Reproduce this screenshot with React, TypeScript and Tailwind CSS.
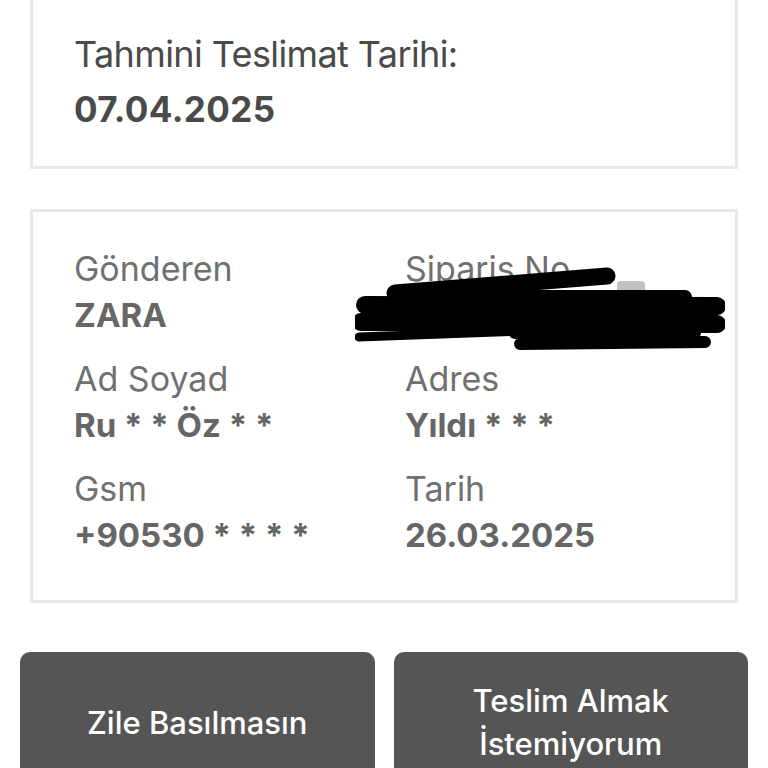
import React from 'react';

const font = { fontFamily: 'Inter, "Liberation Sans", Arial, sans-serif' };

function Field({ label, value }: { label: string; value: string }) {
  return (
    <div>
      <div className="h-[46px] text-[34px] leading-[46px] text-[#707070]">{label}</div>
      <div className="h-[46px] text-[33px] leading-[46px] font-bold text-[#666666]">{value}</div>
    </div>
  );
}

function Scribble() {
  return (
    <svg
      className="absolute left-[322px] top-[55px]"
      width="370"
      height="92"
      viewBox="0 0 370 92"
      fill="none"
    >
      <rect x="262" y="14" width="28" height="14" rx="4" fill="#9a9a9a" opacity="0.6" />
      <path d="M40 26 L252 9" stroke="#000" strokeWidth="17" strokeLinecap="round" />
      <path d="M10 38 L362 39" stroke="#000" strokeWidth="18" strokeLinecap="round" />
      <path d="M40 30 L330 30" stroke="#000" strokeWidth="14" strokeLinecap="round" />
      <path d="M6 55 L362 57" stroke="#000" strokeWidth="18" strokeLinecap="round" />
      <path d="M20 46 L350 47" stroke="#000" strokeWidth="12" strokeLinecap="round" />
      <path d="M4 70 L200 63" stroke="#000" strokeWidth="9" strokeLinecap="round" />
      <path d="M165 77 L350 75" stroke="#000" strokeWidth="12" strokeLinecap="round" />
      <path d="M160 66 L340 66" stroke="#000" strokeWidth="12" strokeLinecap="round" />
    </svg>
  );
}

export default function App() {
  return (
    <div className="w-[768px] h-[768px] overflow-hidden bg-white" style={font}>
      {/* Estimated delivery */}
      <div className="mx-[30px] -mt-[20px] border-[3px] border-[#e8e8e8] pl-[41px] pt-[48px] pb-[34px]">
        <div className="h-[46px] text-[36px] leading-[46px] tracking-[-0.6px] text-[#4a4a4a]">Tahmini Teslimat Tarihi:</div>
        <div className="mt-[9px] h-[46px] text-[35px] leading-[46px] tracking-[0.4px] font-bold text-[#4a4a4a]">07.04.2025</div>
      </div>

      {/* Order details */}
      <div className="relative mx-[30px] mt-[40px] border-[3px] border-[#e8e8e8] pl-[41px] pt-[34px] pb-[42px]">
        <div className="grid grid-cols-[331px_1fr] gap-y-[18px]">
          <Field label="Gönderen" value="ZARA" />
          <Field label="Siparis No" value="" />
          <Field label="Ad Soyad" value="Ru * * Öz * *" />
          <Field label="Adres" value="Yıldı * * *" />
          <Field label="Gsm" value="+90530 * * * *" />
          <Field label="Tarih" value="26.03.2025" />
        </div>
        <Scribble />
      </div>

      {/* Actions */}
      <div className="mt-[49px] grid grid-cols-2 gap-[19px] px-[20px]">
        <button className="h-[140px] rounded-t-[10px] bg-[#555555] text-[31px] font-medium leading-[43px] text-white">
          Zile Basılmasın
        </button>
        <button className="h-[140px] rounded-t-[10px] bg-[#555555] text-[31px] font-medium leading-[43px] text-white">
          Teslim Almak
          <br />
          İstemiyorum
        </button>
      </div>
    </div>
  );
}
